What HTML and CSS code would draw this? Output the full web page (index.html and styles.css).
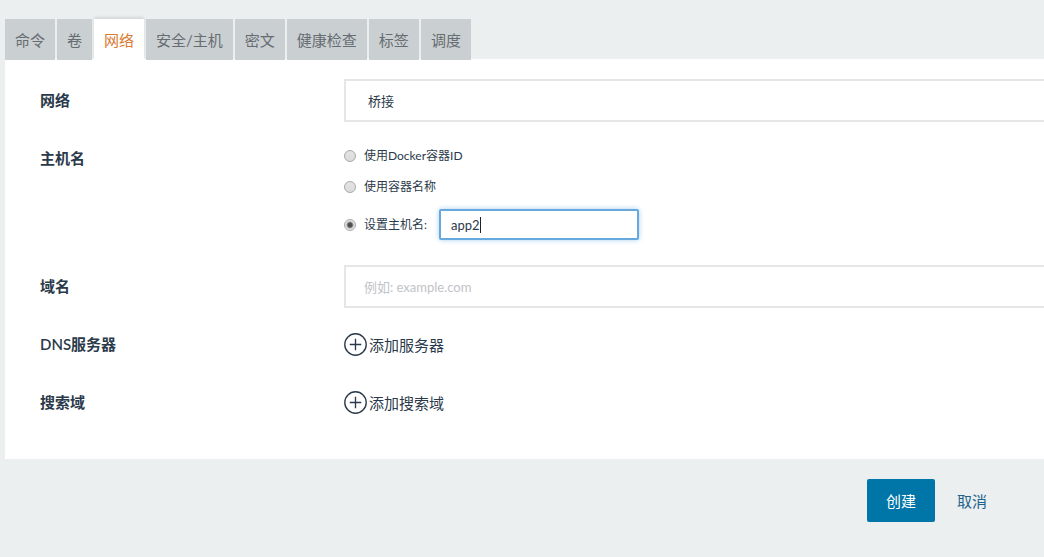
FILE: index.html
```html
<!DOCTYPE html>
<html lang="zh-CN">
<head>
<meta charset="utf-8">
<meta name="viewport" content="width=device-width, initial-scale=1">
<title>网络</title>
<link rel="stylesheet" href="styles.css">
</head>
<body>
<nav class="tabs">
  <button type="button" class="tab">命令</button>
  <button type="button" class="tab">卷</button>
  <button type="button" class="tab tab-active">网络</button>
  <button type="button" class="tab">安全/主机</button>
  <button type="button" class="tab">密文</button>
  <button type="button" class="tab">健康检查</button>
  <button type="button" class="tab">标签</button>
  <button type="button" class="tab">调度</button>
</nav>
<form>
  <section class="panel">
    <div class="row">
      <label class="row-label" for="network">网络</label>
      <select class="field field-select" id="network"><option>桥接</option></select>
    </div>
    <div class="row">
      <span class="row-label" id="host-label">主机名</span>
      <div class="options" role="radiogroup" aria-labelledby="host-label">
        <label class="option"><input class="radio" type="radio" name="host"><span>使用Docker容器ID</span></label>
        <label class="option"><input class="radio" type="radio" name="host"><span>使用容器名称</span></label>
        <div class="option-custom">
          <label class="option"><input class="radio" type="radio" name="host" checked><span>设置主机名:</span></label>
          <div class="host-box">
            <input class="host-input" type="text" value="app2" aria-label="设置主机名">
            <span class="caret"></span>
          </div>
        </div>
      </div>
    </div>
    <div class="row">
      <label class="row-label" for="domain">域名</label>
      <input class="field" id="domain" type="text" placeholder="例如: example.com">
    </div>
    <div class="row">
      <span class="row-label">DNS服务器</span>
      <button type="button" class="add">
        <svg class="add-icon" viewBox="0 0 24 24" aria-hidden="true"><circle cx="12" cy="12" r="11.2"/><path d="M12 6v12M6 12h12"/></svg>
        <span>添加服务器</span>
      </button>
    </div>
    <div class="row">
      <span class="row-label">搜索域</span>
      <button type="button" class="add">
        <svg class="add-icon" viewBox="0 0 24 24" aria-hidden="true"><circle cx="12" cy="12" r="11.2"/><path d="M12 6v12M6 12h12"/></svg>
        <span>添加搜索域</span>
      </button>
    </div>
  </section>
  <footer class="actions">
    <button type="submit" class="create">创建</button>
    <a class="cancel" href="#">取消</a>
  </footer>
</form>
</body>
</html>
```
FILE: styles.css
```css
* {
  box-sizing: border-box;
}

body {
  margin: 0;
  padding: 19px 0 0 5px;
  background: #ebeff0;
  color: #2b3a4a;
  font: 15px/20px Lato, "Noto Sans CJK SC", sans-serif;
}

button,
input,
select {
  margin: 0;
  font: inherit;
  color: inherit;
}

.tabs {
  display: flex;
  gap: 2px;
}

.tab {
  height: 41px;
  padding: 0 10px;
  border: 0;
  background: #cacfd1;
  color: #666c71;
  white-space: nowrap;
}

.tab-active {
  background: #fff;
  color: #d97b30;
  box-shadow: 0 -2px 3px rgba(0, 0, 0, 0.1);
}

.panel {
  display: flex;
  flex-direction: column;
  gap: 15px;
  margin-top: -1px;
  padding: 20px 0 35px 35px;
  background: #fff;
}

.row {
  display: grid;
  grid-template-columns: 304px minmax(0, 1fr);
  align-items: start;
}

.row-label {
  font-weight: 600;
  line-height: 43px;
}

.field {
  width: 100%;
  height: 43px;
  padding: 0 18px;
  border: 2px solid #e4e6e7;
  border-right: 0;
  border-radius: 0;
  background: #fff;
  font-size: 13px;
}

.field::placeholder {
  color: #bfc3c7;
}

.field-select {
  padding: 0 22px;
  appearance: none;
}

.options {
  display: flex;
  flex-direction: column;
  align-items: flex-start;
  gap: 11px;
  padding: 9px 0 10px;
}

.option {
  display: flex;
  align-items: center;
  gap: 8px;
  font-size: 12px;
}

.option-custom {
  display: flex;
  align-items: center;
  gap: 12px;
  padding-top: 1px;
}

.radio {
  appearance: none;
  width: 12px;
  height: 12px;
  border: 1px solid #a9a9a9;
  border-radius: 50%;
  background: linear-gradient(#e3e3e3, #dcdcdc);
}

.radio:checked {
  background: radial-gradient(circle, #505050 0 2px, #e4e4e4 4px);
}

.host-box {
  position: relative;
}

.host-input {
  display: block;
  width: 200px;
  height: 31px;
  padding: 0 10px;
  border: 2px solid #67a9dc;
  border-radius: 2px;
  outline: 0;
  background: #fff;
  box-shadow: 0 0 5px rgba(103, 175, 233, 0.6);
  font-size: 13px;
  caret-color: transparent;
}

.caret {
  position: absolute;
  top: 8px;
  left: 41px;
  width: 1px;
  height: 16px;
  background: #222;
}

.add {
  display: flex;
  align-items: center;
  justify-self: start;
  gap: 2px;
  height: 43px;
  padding: 0;
  border: 0;
  background: none;
}

.add-icon {
  width: 23px;
  height: 23px;
  fill: none;
  stroke: #2b3a4a;
  stroke-width: 1.4;
}

.actions {
  display: flex;
  justify-content: flex-end;
  align-items: center;
  gap: 22px;
  padding: 20px 57px 35px 0;
}

.create {
  height: 43px;
  padding: 0 19px;
  border: 0;
  border-radius: 2px;
  background: #0075a8;
  color: #fff;
}

.cancel {
  color: #1f628c;
  text-decoration: none;
}
```
